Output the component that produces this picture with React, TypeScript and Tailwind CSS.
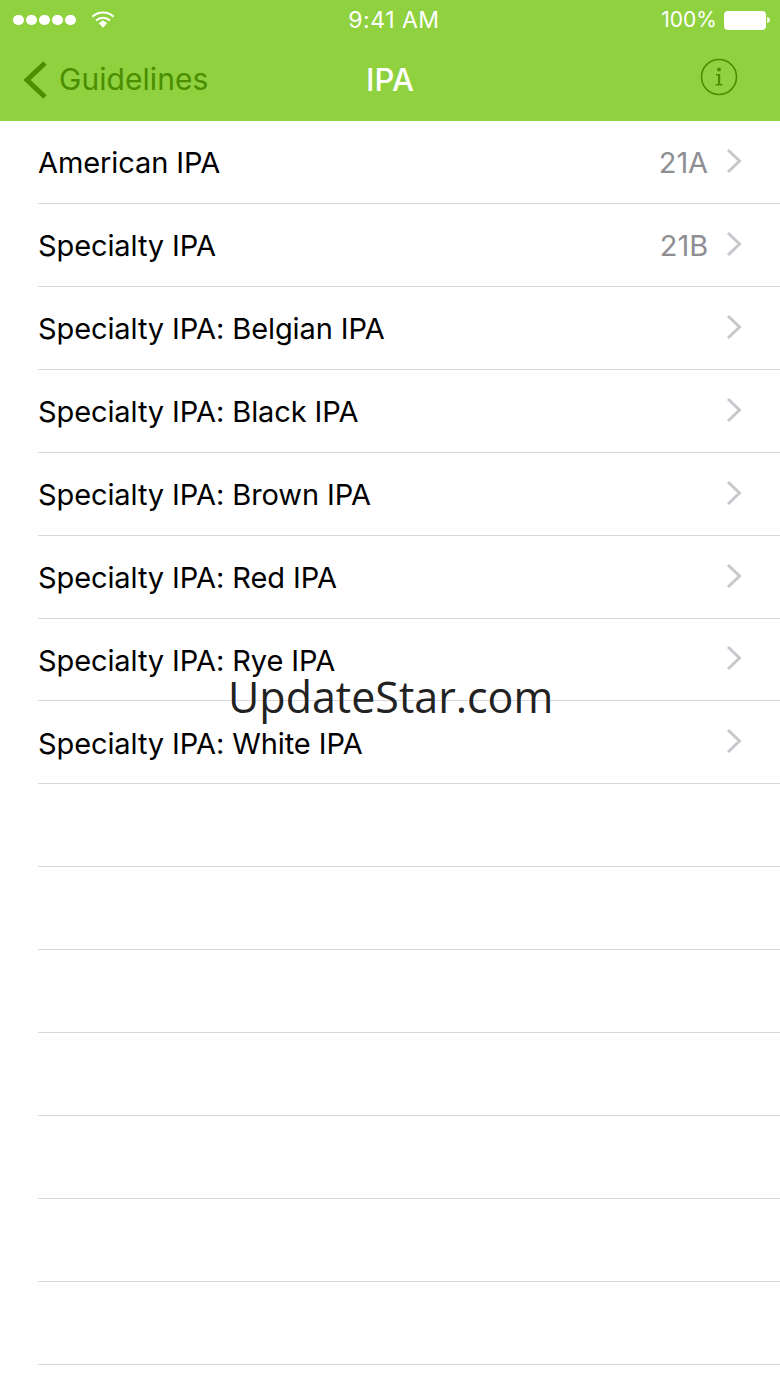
import React from "react";

const rows: { t: string; c?: string; arrow: boolean }[] = [
  { t: "American IPA", c: "21A", arrow: true },
  { t: "Specialty IPA", c: "21B", arrow: true },
  { t: "Specialty IPA: Belgian IPA", arrow: true },
  { t: "Specialty IPA: Black IPA", arrow: true },
  { t: "Specialty IPA: Brown IPA", arrow: true },
  { t: "Specialty IPA: Red IPA", arrow: true },
  { t: "Specialty IPA: Rye IPA", arrow: true },
  { t: "Specialty IPA: White IPA", arrow: true },
  { t: "", arrow: false },
  { t: "", arrow: false },
  { t: "", arrow: false },
  { t: "", arrow: false },
  { t: "", arrow: false },
  { t: "", arrow: false },
  { t: "", arrow: false },
];

function Chevron() {
  return (
    <svg width="16" height="26" viewBox="0 0 16 26" className="ml-[18px] mr-[38px] mt-[-2px] shrink-0">
      <path d="M2 2 L13.5 13 L2 24" fill="none" stroke="#c7c7cc" strokeWidth="3" />
    </svg>
  );
}

function Row({ t, c, arrow }: { t: string; c?: string; arrow: boolean }) {
  return (
    <div className="h-[82.93px] ml-[38px] flex items-center border-b border-[#d9d9dc] shrink-0">
      <span className="flex-1 pt-[2px] text-[29px] text-black tracking-[-0.1px]">{t}</span>
      {c && <span className="pt-[2px] text-[29px] text-[#8e8e93] tracking-[-0.1px]">{c}</span>}
      {arrow && <Chevron />}
    </div>
  );
}

export default function App() {
  return (
    <div className="relative w-[780px] h-[1387px] overflow-hidden bg-white font-['Inter','Liberation_Sans',sans-serif]">
      <div className="h-[121px] bg-[#8fd13f] flex flex-col">
        <div className="h-[40px] flex items-center justify-between pl-[13px] pr-[11px] text-white">
          <div className="flex items-center w-[306px]">
            <div className="flex gap-[2.5px]">
              {[0, 1, 2, 3, 4].map((i) => (
                <div key={i} className="w-[10.5px] h-[10.5px] rounded-full bg-white" />
              ))}
            </div>
            <svg width="24" height="19" viewBox="0 0 26 20" className="ml-[15px] mt-[-2px]">
              <path d="M1.5 7 C8 1 18 1 24.5 7" fill="none" stroke="white" strokeWidth="2.2" />
              <path d="M5.5 11 C10 7 16 7 20.5 11" fill="none" stroke="white" strokeWidth="2.2" />
              <path d="M8.5 14 L13 10.8 L17.5 14 L13 19 Z" fill="white" />
            </svg>
          </div>
          <div className="text-[23px] tracking-[0.5px]">9:41 AM</div>
          <div className="flex items-center justify-end w-[300px]">
            <span className="text-[21px]">100%</span>
            <div className="ml-[7px] w-[42px] h-[19px] rounded-[4px] bg-white border border-white/60" />
            <div className="w-[3px] h-[6px] bg-white/80 rounded-r-sm ml-[1px] mr-[-1px]" />
          </div>
        </div>
        <div className="flex-1 flex items-center relative pb-[2px]">
          <svg width="28" height="40" viewBox="0 0 28 40" className="ml-[21px] mr-[1px] shrink-0">
            <path d="M24 3 L6 20 L24 37" fill="none" stroke="#4b8e00" strokeWidth="5" />
          </svg>
          <span className="ml-[9px] text-[30px] text-[#4b8e00] tracking-[0.05px]">Guidelines</span>
          <span className="absolute left-0 right-0 text-center text-[31px] font-medium text-white pt-[2px]">IPA</span>
          <svg width="38" height="38" viewBox="0 0 38 38" className="ml-auto mr-[42px] mb-[5px]">
            <circle cx="19" cy="19" r="17.5" fill="none" stroke="#4b8e00" strokeWidth="1.6" />
            <circle cx="19" cy="11.5" r="1.9" fill="#4b8e00" />
            <path d="M16 16 H20.2 V26 H22.5 V27.5 H15.5 V26 H18 V17.5 H16 Z" fill="#4b8e00" />
          </svg>
        </div>
      </div>
      <div className="flex flex-col">
        {rows.map((r, i) => (
          <Row key={i} {...r} />
        ))}
      </div>
      <div className="absolute top-[667px] left-[228px] text-[43px] leading-[60px] text-[#222] font-['Open_Sans',sans-serif]">
        UpdateStar.com
      </div>
    </div>
  );
}
